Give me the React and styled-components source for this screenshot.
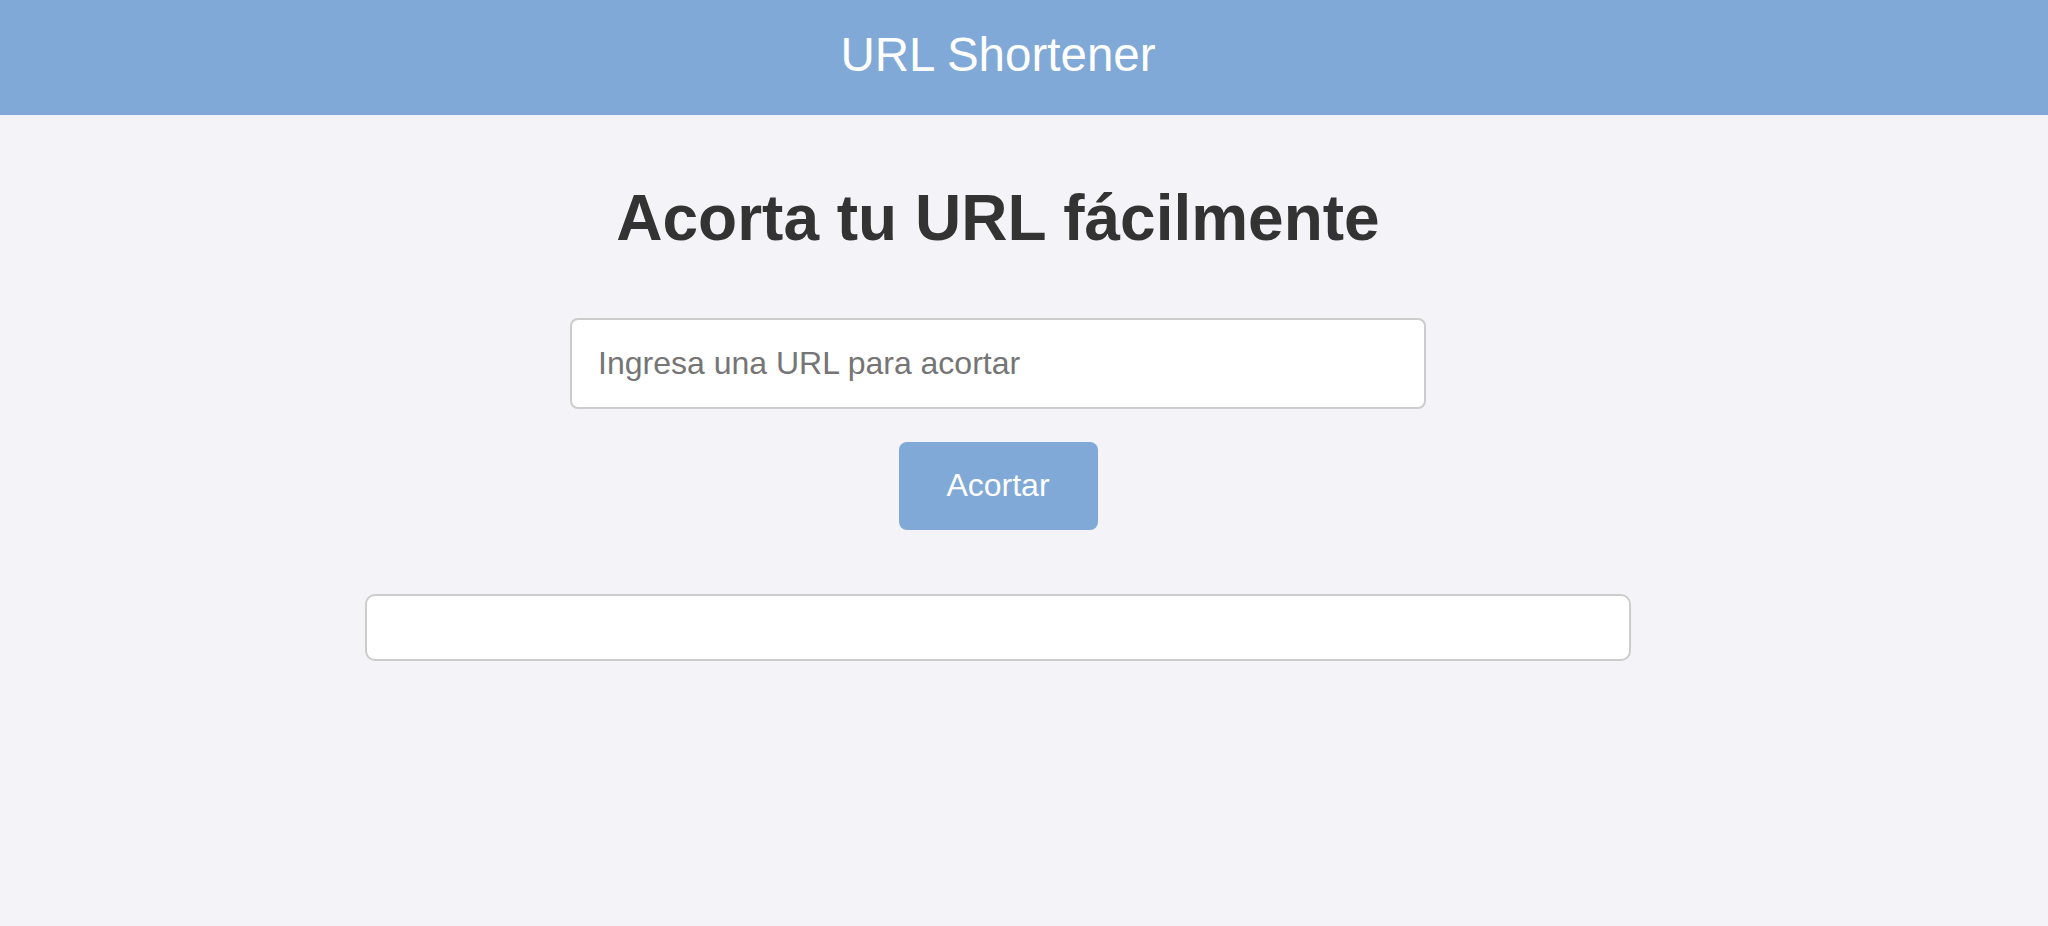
import styled, { createGlobalStyle } from "styled-components";

const GlobalStyle = createGlobalStyle`
  * {
    box-sizing: border-box;
  }
  html, body {
    margin: 0;
    padding: 0;
    background-color: #f4f4f8;
    font-family: "Liberation Sans", Arial, Helvetica, sans-serif;
  }
`;

const App = () => {
  return (
    <>
      <GlobalStyle />
      <Header>
        <HeaderInner>
          <HeaderTitle>URL Shortener</HeaderTitle>
        </HeaderInner>
      </Header>
      <Main>
        <Title>Acorta tu URL fácilmente</Title>
        <Form onSubmit={(e) => e.preventDefault()}>
          <UrlInput type="text" placeholder="Ingresa una URL para acortar" />
          <SubmitButton type="submit">Acortar</SubmitButton>
        </Form>
        <ResultBox />
      </Main>
    </>
  );
};

export default App;

const Header = styled.header`
  background-color: #80a9d7;
  height: 115px;
`;

const HeaderInner = styled.div`
  width: 1996px;
  display: flex;
  justify-content: center;
`;

const HeaderTitle = styled.h1`
  margin: 0;
  padding-top: 28px;
  font-size: 47.5px;
  line-height: 54px;
  font-weight: 400;
  color: #ffffff;
`;

const Main = styled.main`
  width: 1996px;
  display: flex;
  flex-direction: column;
  align-items: center;
`;

const Title = styled.h2`
  margin: 66px 0 63px;
  font-size: 64px;
  line-height: 74px;
  font-weight: 700;
  color: #333333;
`;

const Form = styled.form`
  display: flex;
  flex-direction: column;
  align-items: center;
  gap: 33px;
`;

const UrlInput = styled.input`
  width: 856px;
  height: 91px;
  padding: 0 26px;
  font-family: inherit;
  font-size: 32px;
  color: #333333;
  background-color: #ffffff;
  border: 2px solid #cccccc;
  border-radius: 8px;
  outline: none;
  &::placeholder {
    color: #757575;
  }
`;

const SubmitButton = styled.button`
  width: 199px;
  height: 88px;
  padding: 0 0 2px;
  font-family: inherit;
  font-size: 32px;
  color: #ffffff;
  background-color: #80a9d7;
  border: none;
  border-radius: 8px;
  cursor: pointer;
  &:hover {
    background-color: #6f98c6;
  }
`;

const ResultBox = styled.div`
  margin-top: 64px;
  width: 1266px;
  height: 67px;
  background-color: #ffffff;
  border: 2px solid #cccccc;
  border-radius: 10px;
`;
